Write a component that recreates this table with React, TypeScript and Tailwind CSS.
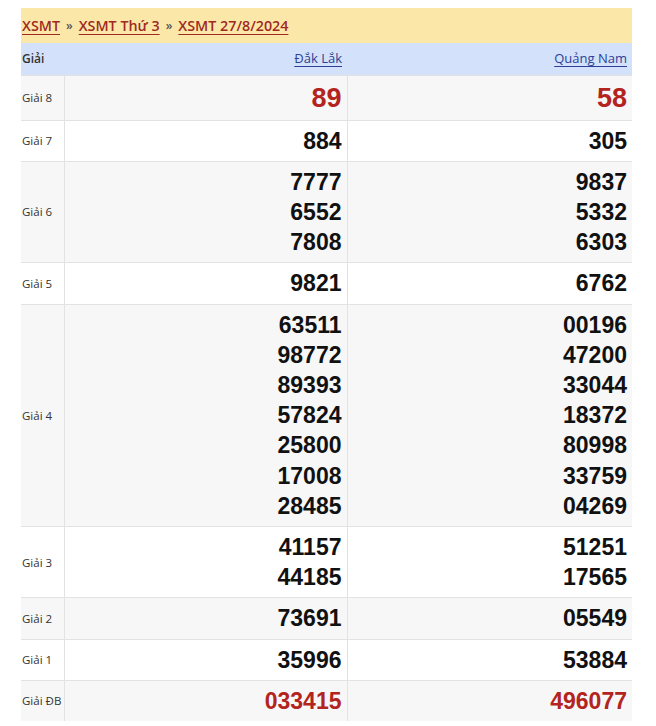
import React from 'react';

type Row = { label: string; a: string[]; b: string[]; red?: boolean; big?: boolean };

const rows: Row[] = [
  { label: 'Giải 8', a: ['89'], b: ['58'], red: true, big: true },
  { label: 'Giải 7', a: ['884'], b: ['305'] },
  { label: 'Giải 6', a: ['7777', '6552', '7808'], b: ['9837', '5332', '6303'] },
  { label: 'Giải 5', a: ['9821'], b: ['6762'] },
  {
    label: 'Giải 4',
    a: ['63511', '98772', '89393', '57824', '25800', '17008', '28485'],
    b: ['00196', '47200', '33044', '18372', '80998', '33759', '04269'],
  },
  { label: 'Giải 3', a: ['41157', '44185'], b: ['51251', '17565'] },
  { label: 'Giải 2', a: ['73691'], b: ['05549'] },
  { label: 'Giải 1', a: ['35996'], b: ['53884'] },
  { label: 'Giải ĐB', a: ['033415'], b: ['496077'], red: true },
];

const NumCell = ({ nums, red, big }: { nums: string[]; red?: boolean; big?: boolean }) => (
  <td
    className={`border-l border-[#e2e2e2] pr-[5px] py-[5px] text-right align-middle font-['Liberation_Sans',Arial,sans-serif] font-bold ${
      big ? 'text-[27px] leading-[34px]' : 'text-[23px] leading-[30.2px]'
    } ${red ? 'text-[#b3241e]' : 'text-[#111]'}`}
  >
    {nums.map((n) => (
      <div key={n}>{n}</div>
    ))}
  </td>
);

const App = () => {
  return (
    <div className="w-[656px] h-[726px] bg-white pt-[8px] pl-[21px] font-['Open_Sans','Noto_Sans',sans-serif]">
      <div className="w-[611px]">
        <div className="h-[35px] bg-[#fbe8a9] flex items-center pl-[1px] text-[14.3px] font-semibold text-[#9f2a23]">
          <a className="underline underline-offset-[3px]">XSMT</a>
          <span className="mx-[6px] text-[#555] text-[12px]">»</span>
          <a className="underline underline-offset-[3px]">XSMT Thứ 3</a>
          <span className="mx-[6px] text-[#555] text-[12px]">»</span>
          <a className="underline underline-offset-[3px]">XSMT 27/8/2024</a>
        </div>
        <table className="w-full border-collapse table-fixed">
          <colgroup>
            <col className="w-[43px]" />
            <col className="w-[283px]" />
            <col />
          </colgroup>
          <thead>
            <tr className="h-[32px] bg-[#d3e2fa]">
              <th className="text-left text-[12px] font-semibold text-[#333] pl-[1px]">Giải</th>
              <th className="text-right pr-[5px] text-[13px] font-normal text-[#2d3f96]">
                <a className="underline underline-offset-[3px]">Đắk Lắk</a>
              </th>
              <th className="text-right pr-[5px] text-[13px] font-normal text-[#2d3f96]">
                <a className="underline underline-offset-[3px]">Quảng Nam</a>
              </th>
            </tr>
          </thead>
          <tbody>
            {rows.map((r, i) => (
              <tr
                key={r.label}
                className={`border-t border-[#e2e2e2] ${i % 2 === 0 ? 'bg-[#f7f7f7]' : 'bg-white'}`}
              >
                <td className="pl-[1px] text-[11.5px] text-[#333] align-middle">{r.label}</td>
                <NumCell nums={r.a} red={r.red} big={r.big} />
                <NumCell nums={r.b} red={r.red} big={r.big} />
              </tr>
            ))}
          </tbody>
        </table>
      </div>
    </div>
  );
};

export default App;
